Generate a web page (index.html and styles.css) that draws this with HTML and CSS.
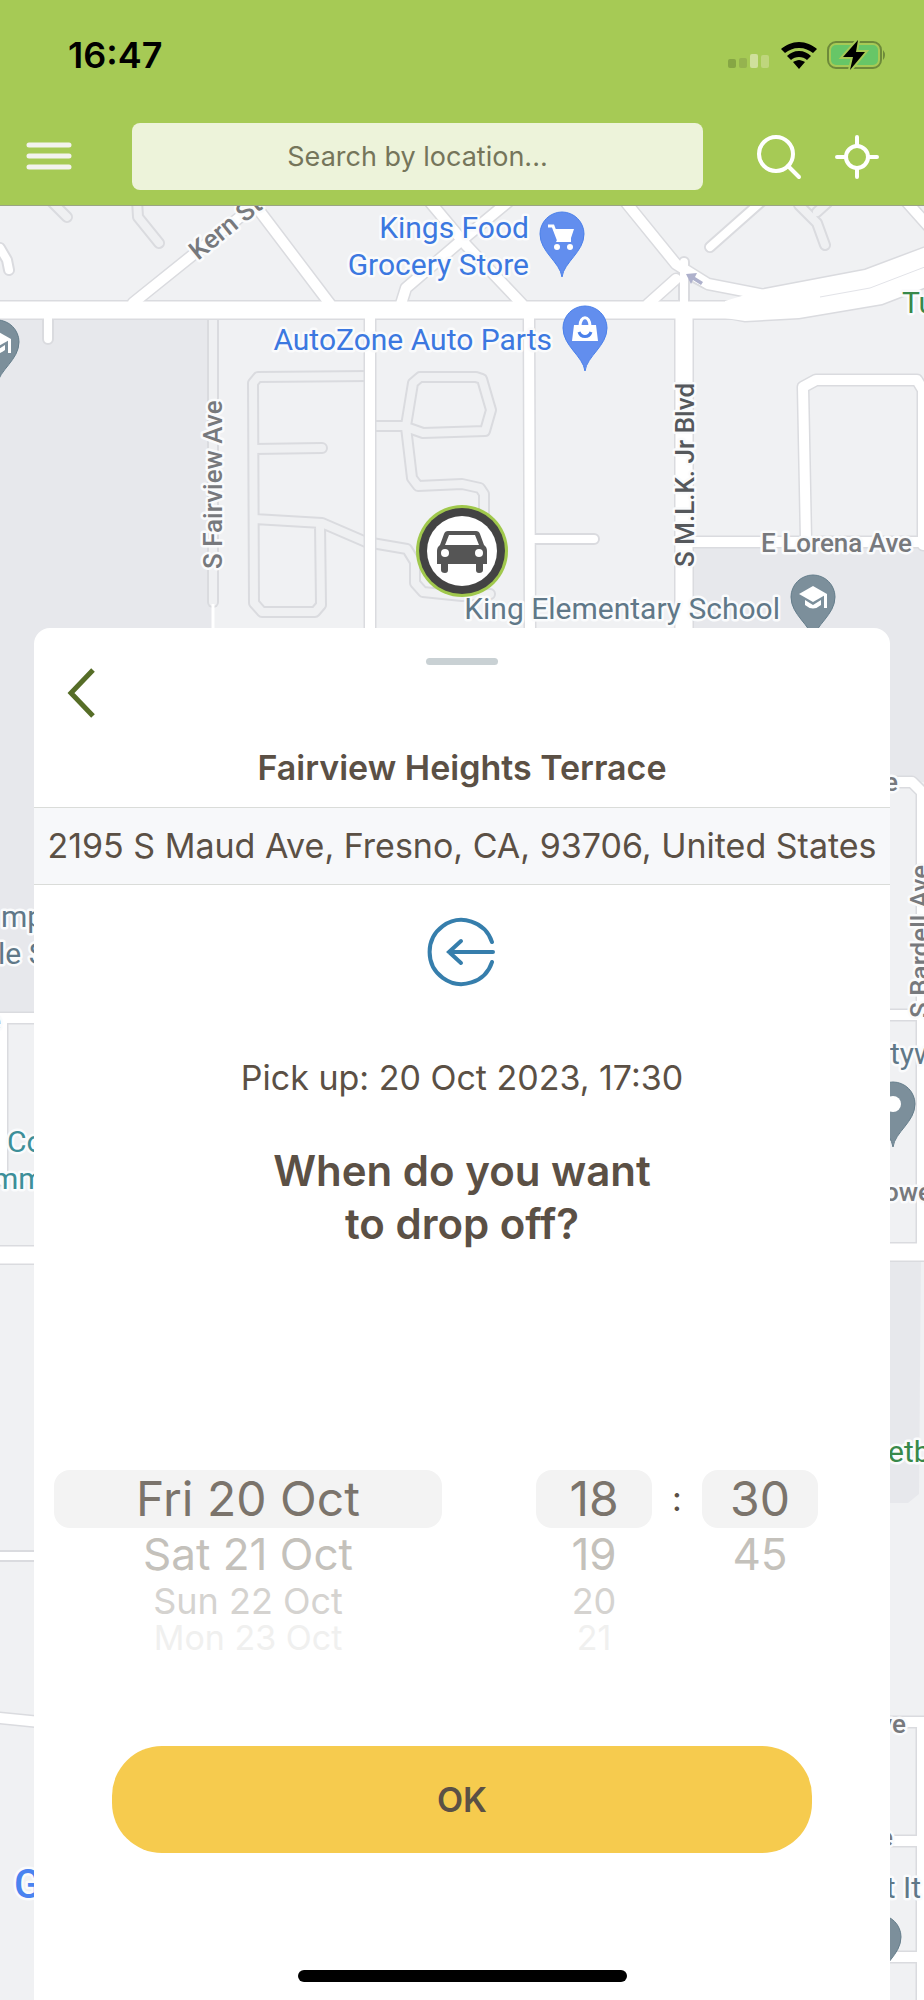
FILE: index.html
```html
<!DOCTYPE html>
<html lang="en">
  <head>
    <meta charset="UTF-8" />
    <meta name="viewport" content="width=device-width, initial-scale=1.0" />
    <title>Fairview Heights Terrace</title>
    <link rel="stylesheet" href="styles.css">
  </head>
  <body>
    <!-- map -->
    <svg class="map" viewBox="0 0 924 2000" preserveAspectRatio="xMidYMin slice" role="img" aria-label="Map of Fresno">
      <defs>
        <g id="lanes">
          <path d="M50 200L67 217M137 200L138 217L159 243M799 205L817 223L825 245M817 212L827 203"/>
          <path d="M213 315V602"/>
          <path d="M370 376L258 377L253 383L254 603L262 612H315L321 605L320 524M254 519L322 523L366 542L407 549L415 562V583L423 592L462 596L490 594M254 449L322 448"/>
          <path d="M375 426H406L413 383L420 377H476L482 379L491 410L485 431L423 433L406 427L412 478L418 486L462 484L480 488L484 494V540"/>
        </g>
        <g id="streets">
          <path d="M0 248L7 260L9 270M48 312V339M710 247L762 201M535 539H594"/>
          <path d="M684 305V262M705 283L690 275M-10 1556H60"/>
        </g>
        <g id="roads">
          <path d="M133 303L255 205L330 304M401 304L406 288L462 240L508 202M430 202L466 245L522 304"/>
          <path d="M624 200L676 264L708 284L770 296M648 304L676 279M905 200L930 228"/>
          <path d="M370 315V640M529 315L530 640"/>
          <path d="M806 540L803 387L816 380H917L923 390V545M684 542H940"/>
          <path d="M870 782H912L922 792V1250M870 1015H930M-2 1018H50M2 1018V1180"/>
          <path d="M-10 1717L50 1723M870 1722H930M922 1728V2010M870 1841H922M870 1957H922"/>
        </g>
        <g id="avenues">
          <path d="M-10 310H760M684 310V640M-10 1255H60M870 1252H940"/>
        </g>
        <path id="pin" d="M0 43C-2 28-22 18-22 0A22 22 0 1 1 22 0C22 18 2 28 0 43Z"/>
        <g id="cap">
          <path d="M-14-3L0-11L14-3L0 5Z"/>
          <path d="M-8 3L0 8L8 3V8Q0 15-8 8ZM11-3H14V11H11Z"/>
        </g>
      </defs>

      <rect class="land" width="924" height="2000"/>
      <path class="block" d="M0 310H213V640H40V1018H0ZM684 542H924V782H870V640H684ZM880 1252H921L919 1494L908 1503H880Z"/>

      <use href="#lanes" class="lane-edge"/>
      <use href="#lanes" class="lane"/>
      <use href="#streets" class="street-edge"/>
      <use href="#roads" class="road-edge"/>
      <use href="#avenues" class="avenue-edge"/>
      <path class="highway-edge" d="M735 301L765 289L865 270L934 244V284L882 304L799 318L745 321L730 318Z"/>
      <use href="#streets" class="street"/>
      <use href="#roads" class="road"/>
      <use href="#avenues" class="avenue"/>
      <path class="highway" d="M725 301L765 289L865 270L934 244V284L882 304L799 318L745 321L725 318Z"/>
      <path class="divider" d="M820 297L870 288L930 265"/>
      <path class="path" d="M213 604V640"/>
      <path class="oneway" d="M686 274L697 273L695 277L703 282L701 285L693 280L691 284Z"/>

      <g class="label street-name">
        <text transform="translate(198 261) rotate(-39)">Kern St</text>
        <text transform="translate(222 569) rotate(-90)">S Fairview Ave</text>
        <text class="dark" transform="translate(694 567) rotate(-90)">S M.L.K. Jr Blvd</text>
        <text x="761" y="552">E Lorena Ave</text>
        <text x="898" y="791" text-anchor="end">Ave</text>
        <text transform="translate(929 1018) rotate(-90)">S Bardell Ave</text>
        <text x="884" y="1201">owe</text>
        <text x="906" y="1733" text-anchor="end">Ave</text>
        <text x="893" y="1846" text-anchor="end">Ave</text>
        <text x="1" y="1030" text-anchor="end">Ave</text>
      </g>
      <g class="label shop">
        <text x="529" y="238" text-anchor="end">Kings Food</text>
        <text x="529" y="275" text-anchor="end">Grocery Store</text>
        <text x="552" y="350" text-anchor="end">AutoZone Auto Parts</text>
      </g>
      <g class="label place">
        <text x="780" y="619" text-anchor="end">King Elementary School</text>
        <text x="1" y="927">mp</text>
        <text x="-2" y="964">le S</text>
        <text x="890" y="1064">tyw</text>
        <text x="921" y="1898" text-anchor="end">t It</text>
      </g>
      <g class="label park">
        <text x="902" y="313">Tu</text>
        <text x="888" y="1462">etb</text>
      </g>
      <g class="label civic">
        <text x="7" y="1152">Co</text>
        <text x="-8" y="1189">mm</text>
      </g>
      <text class="label brand" x="14" y="1898">G</text>

      <g class="pin-shop" transform="translate(562 234)">
        <use href="#pin"/>
        <path class="glyph-line" d="M-14-8H-9L-4 5H9"/>
        <path class="glyph" d="M-9-5H12L9 4H-5ZM-5 6H9V8H-6Z"/>
        <circle class="glyph" cx="-5" cy="13" r="3"/>
        <circle class="glyph" cx="8" cy="13" r="3"/>
      </g>
      <g class="pin-shop" transform="translate(585 328)">
        <use href="#pin"/>
        <path class="glyph" d="M-11-3H11L13 13H-13Z"/>
        <path class="glyph-line" d="M-5-2C-5-13 5-13 5-2"/>
        <path class="smile" d="M-6 4C-4 10 4 10 6 4"/>
      </g>
      <g class="pin-place" transform="translate(813 597)">
        <use href="#pin"/>
        <use href="#cap" class="glyph"/>
      </g>
      <g class="pin-place" transform="translate(-3 342)">
        <use href="#pin"/>
        <use href="#cap" class="glyph"/>
      </g>
      <g class="pin-place" transform="translate(893 1104)">
        <use href="#pin"/>
        <circle class="glyph" r="8"/>
      </g>
      <g class="pin-place" transform="translate(879 1937)">
        <use href="#pin"/>
      </g>

      <!-- selected car -->
      <g transform="translate(462 551)">
        <circle class="car-halo" r="46"/>
        <circle class="car-ring" r="43"/>
        <circle class="car-disc" r="35"/>
        <path class="car" fill-rule="evenodd" d="M-14-20H14Q17-20 18-17L22-6Q25-4 25 0V13H21V19Q21 22 17 22Q14 22 14 19V13H-14V19Q-14 22-17 22Q-21 22-21 19V13H-25V0Q-25-4-22-6L-18-17Q-17-20-14-20ZM-13-16L-17-6H17L13-16Z"/>
        <circle class="car-disc" cx="-17" cy="2" r="4"/>
        <circle class="car-disc" cx="17" cy="2" r="4"/>
      </g>
    </svg>

    <header class="header">
      <div class="status">
        <span class="status__time">16:47</span>
        <div class="status__icons">
          <svg width="44" height="30" viewBox="0 0 44 30" aria-hidden="true">
            <rect x="1" y="19" width="8" height="9" rx="2" fill="#86a644"/>
            <rect x="12" y="18" width="8" height="10" rx="2" fill="#95b34f"/>
            <rect x="23" y="14" width="8" height="14" rx="2" fill="#cfe09c"/>
            <rect x="34" y="15" width="8" height="13" rx="2" fill="#bfd67d"/>
          </svg>
          <svg width="36" height="30" viewBox="0 0 36 30" aria-hidden="true">
            <path d="M18 2C11 2 5 5 0 9L4 13C8 10 12 8 18 8S28 10 32 13L36 9C31 5 25 2 18 2ZM18 11C13 11 9 13 6 16L10 20C12 18 15 17 18 17S24 18 26 20L30 16C27 13 23 11 18 11ZM18 20C16 20 14 21 12 22L18 29L24 22C22 21 20 20 18 20Z"/>
          </svg>
          <svg width="60" height="30" viewBox="0 0 60 30" aria-hidden="true">
            <rect x="1" y="2" width="53" height="26" rx="8" fill="none" stroke="#6d8a3a" stroke-width="2"/>
            <rect x="4" y="5" width="47" height="20" rx="5" fill="#67c667"/>
            <path d="M56 10Q60 15 56 20Z" fill="#6d8a3a"/>
            <path d="M31 0L16 17H26L23 30L38 12H29Z" stroke="#a6ca55" stroke-width="4" paint-order="stroke"/>
          </svg>
        </div>
      </div>
      <div class="toolbar">
        <button class="icon-btn" type="button" aria-label="Menu">
          <svg width="46" height="46" viewBox="0 0 46 46"><path d="M3 11H43M3 22H43M3 33H43" stroke="#f3f3ee" stroke-width="5" stroke-linecap="round"/></svg>
        </button>
        <input class="toolbar__search" type="text" placeholder="Search by location..." aria-label="Search by location">
        <div class="toolbar__actions">
          <button class="icon-btn" type="button" aria-label="Search">
            <svg width="46" height="46" viewBox="0 0 46 46"><g fill="none" stroke="#fff" stroke-width="4" stroke-linecap="round"><circle cx="20" cy="20" r="17"/><path d="M32 32L43 43"/></g></svg>
          </button>
          <button class="icon-btn" type="button" aria-label="My location">
            <svg width="46" height="46" viewBox="0 0 46 46"><g fill="none" stroke="#fff" stroke-width="4" stroke-linecap="round"><circle cx="23" cy="23" r="11"/><path d="M23 3V12M23 34V43M3 23H12M34 23H43"/></g></svg>
          </button>
        </div>
      </div>
    </header>

    <main class="sheet">
      <div class="sheet__handle"></div>
      <button class="back" type="button" aria-label="Back">
        <svg width="34" height="54" viewBox="0 0 34 54"><path d="M29 4L7 27L29 50" fill="none" stroke="#566d27" stroke-width="5"/></svg>
      </button>
      <h1 class="sheet__title">Fairview Heights Terrace</h1>
      <p class="address">2195 S Maud Ave, Fresno, CA, 93706, United States</p>
      <svg class="step" width="70" height="70" viewBox="0 0 70 70" aria-hidden="true">
        <g fill="none" stroke="#367eac" stroke-width="4" stroke-linecap="round">
          <path d="M65 25A32 32 0 1 0 65 45"/>
          <path d="M66 35H22M34 24L22 35L34 46"/>
        </g>
      </svg>
      <p class="pickup">Pick up: 20 Oct 2023, 17:30</p>
      <h2 class="question">When do you want<br>to drop off?</h2>

      <div class="picker">
        <ul class="wheel wheel--date" role="listbox" aria-label="Date">
          <li class="wheel__item" role="option" aria-selected="true">Fri 20 Oct</li>
          <li class="wheel__item" role="option">Sat 21 Oct</li>
          <li class="wheel__item" role="option">Sun 22 Oct</li>
          <li class="wheel__item" role="option">Mon 23 Oct</li>
        </ul>
        <ul class="wheel" role="listbox" aria-label="Hour">
          <li class="wheel__item" role="option" aria-selected="true">18</li>
          <li class="wheel__item" role="option">19</li>
          <li class="wheel__item" role="option">20</li>
          <li class="wheel__item" role="option">21</li>
        </ul>
        <span class="picker__colon">:</span>
        <ul class="wheel" role="listbox" aria-label="Minutes">
          <li class="wheel__item" role="option" aria-selected="true">30</li>
          <li class="wheel__item" role="option">45</li>
        </ul>
      </div>

      <button class="ok" type="button">OK</button>
      <div class="home"></div>
    </main>
  </body>
</html>
```
FILE: styles.css
```css
* {
  margin: 0;
  padding: 0;
  box-sizing: border-box;
}
body {
  position: relative;
  display: flex;
  flex-direction: column;
  min-height: 100vh;
  overflow-x: hidden;
  background-color: #f0f1f4;
  color: #5b5045;
  font-family: Inter, "Liberation Sans", sans-serif;
}
button {
  border: none;
  background: none;
  color: inherit;
  font-family: inherit;
  cursor: pointer;
}
svg {
  display: block;
}

/* map */
.map {
  position: absolute;
  top: 0;
  left: 0;
  width: 100%;
  height: 100%;
  z-index: -1;
}
.land {
  fill: #f0f1f3;
}
.block {
  fill: #e7e8ec;
}
.lane-edge,
.lane,
.street-edge,
.street,
.road-edge,
.road,
.avenue-edge,
.avenue {
  fill: none;
  stroke: #fff;
  stroke-linecap: round;
  stroke-linejoin: round;
}
.lane-edge,
.street-edge {
  stroke: #dadbdf;
  stroke-width: 12px;
}
.lane {
  stroke: #eff0f2;
  stroke-width: 8px;
}
.street {
  stroke-width: 8px;
}
.road-edge {
  stroke: #dadbdf;
  stroke-width: 13px;
}
.road {
  stroke-width: 10px;
}
.avenue-edge {
  stroke: #dadbdf;
  stroke-width: 20px;
}
.avenue {
  stroke-width: 17px;
}
.highway-edge {
  fill: #dadbdf;
  stroke: #dadbdf;
  stroke-width: 3px;
}
.highway {
  fill: #fff;
}
.divider {
  fill: none;
  stroke: #e2e3e8;
}
.path {
  stroke: #fff;
  stroke-width: 3px;
}
.oneway {
  fill: #aeb1cc;
}
.label {
  font-family: Roboto, "Liberation Sans", sans-serif;
  font-size: 30px;
  paint-order: stroke;
  stroke: #fafbfc;
  stroke-width: 5px;
  stroke-linejoin: round;
}
.street-name {
  font-size: 26px;
  font-weight: 500;
  fill: #77797d;
}
.dark {
  fill: #55585c;
}
.shop {
  fill: #3c78e0;
}
.place {
  fill: #607888;
}
.park {
  fill: #38894a;
}
.civic {
  fill: #3d8f99;
}
.brand {
  font-size: 40px;
  font-weight: 500;
  fill: #4a83f0;
}
.pin-shop {
  fill: #628eee;
  stroke: #4a80ea;
}
.pin-place {
  fill: #7c8f9b;
  stroke: #647d8b;
}
.glyph {
  fill: #fff;
  stroke: none;
}
.glyph-line {
  fill: none;
  stroke: #fff;
  stroke-width: 3px;
}
.smile {
  fill: none;
  stroke-width: 3px;
}
.car-halo {
  fill: #a0c84c;
}
.car-ring {
  fill: #434343;
}
.car-disc {
  fill: #fff;
}
.car {
  fill: #555;
}

/* header */
.header {
  background-color: #a6ca55;
  border-bottom: 1px solid #9aa583;
}
.status {
  display: flex;
  justify-content: space-between;
  align-items: center;
  height: 110px;
  padding: 0 37px 0 68px;
}
.status__time {
  color: #000;
  font-size: 36px;
  font-weight: 600;
}
.status__icons {
  display: flex;
  gap: 10px;
}
.toolbar {
  display: flex;
  align-items: center;
  padding: 13px 44px 15px 26px;
}
.icon-btn {
  width: 46px;
  height: 46px;
}
.toolbar__search {
  flex: 1;
  min-width: 0;
  height: 67px;
  margin: 0 53px 0 60px;
  border: none;
  border-radius: 8px;
  background-color: #edf3da;
  color: #5b5045;
  font-family: inherit;
  font-size: 27px;
  text-align: center;
}
.toolbar__search::placeholder {
  color: #75755a;
}
.toolbar__actions {
  display: flex;
  gap: 32px;
}

/* sheet */
.sheet {
  flex: 1;
  display: flex;
  flex-direction: column;
  margin: 422px 34px 0;
  border-radius: 16px 16px 0 0;
  background-color: #fff;
}
.sheet__handle {
  align-self: center;
  width: 72px;
  height: 7px;
  margin-top: 30px;
  border-radius: 4px;
  background-color: #c9d1d4;
}
.back {
  align-self: flex-start;
  width: 34px;
  height: 54px;
  margin: 1px 0 0 30px;
}
.sheet__title {
  padding: 26px 0 17px;
  font-size: 34px;
  font-weight: 600;
  line-height: 44px;
  text-align: center;
}
.address {
  border: 1px solid #dadcd9;
  border-width: 1px 0;
  background-color: #f7f8fa;
  font-size: 34px;
  line-height: 76px;
  text-align: center;
  white-space: nowrap;
}
.step {
  align-self: center;
  margin-top: 32px;
}
.pickup {
  margin-top: 69px;
  font-size: 34px;
  line-height: 44px;
  text-align: center;
}
.question {
  margin-top: 44px;
  font-size: 42px;
  font-weight: 600;
  line-height: 53px;
  text-align: center;
}

/* drop off picker */
.picker {
  display: flex;
  align-items: flex-start;
  height: 184px;
  margin-top: 220px;
  padding: 0 72px 0 20px;
}
.wheel {
  width: 116px;
  list-style: none;
  text-align: center;
}
.wheel--date {
  flex: 1;
  margin-right: 94px;
}
.wheel__item {
  color: #c4c1bb;
  font-size: 44px;
  line-height: 53px;
}
.wheel__item[aria-selected="true"] {
  border-radius: 16px;
  background-color: #f3f3f3;
  color: #7b746c;
  font-size: 48px;
  line-height: 58px;
}
.wheel__item:nth-child(3) {
  font-size: 36px;
  line-height: 40px;
  color: #d5d3d0;
}
.wheel__item:nth-child(4) {
  font-size: 34px;
  line-height: 33px;
  color: #f0f0ef;
}
.picker__colon {
  width: 50px;
  font-size: 34px;
  line-height: 58px;
  text-align: center;
}
.ok {
  height: 107px;
  margin: 92px 78px 0;
  border-radius: 50px;
  background-color: #f6cb4e;
  font-size: 34px;
  font-weight: 600;
}
.home {
  align-self: center;
  width: 329px;
  height: 12px;
  margin: auto 0 18px;
  border-radius: 6px;
  background-color: #000;
}
```
